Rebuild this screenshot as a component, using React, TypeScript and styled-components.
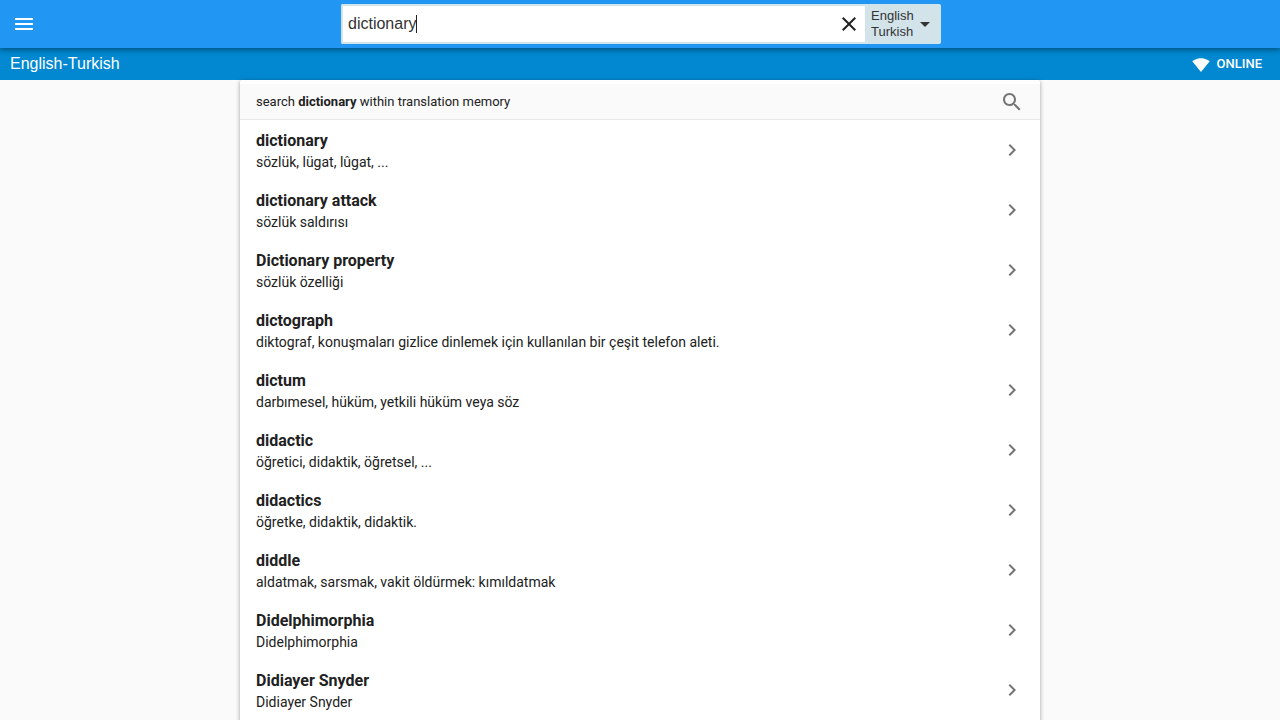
import React, { useLayoutEffect, useRef, useState } from "react";
import styled, { createGlobalStyle } from "styled-components";

const GlobalStyle = createGlobalStyle`
  *, *::before, *::after { box-sizing: border-box; }
  html { scrollbar-width: none; }
  body {
    margin: 0;
    background: #fafafa;
    color: #212121;
    font-family: Roboto, "Noto Sans", sans-serif;
    font-size: 14px;
  }
`;

const TopBar = styled.header`
  position: relative;
  z-index: 2;
  display: grid;
  grid-template-columns: 1fr minmax(0, 600px) 1fr;
  align-items: center;
  height: 48px;
  background: #2196f3;
  box-shadow: 0 2px 5px rgba(0, 0, 0, 0.4);
`;

const IconButton = styled.button`
  display: flex;
  align-items: center;
  justify-content: center;
  width: 24px;
  height: 24px;
  padding: 0;
  border: 0;
  background: none;
  color: inherit;
  cursor: pointer;
`;

const MenuButton = styled(IconButton)`
  margin-left: 12px;
  color: #fff;
`;

const SearchBox = styled.form`
  display: flex;
  height: 40px;
  margin: 0 -1px 0 1px;
  border: 2px solid #d2e4ea;
  border-right-width: 0;
  border-radius: 2px;
  background: #d2e4ea;
`;

const Field = styled.div`
  position: relative;
  display: flex;
  flex: 1;
  align-items: center;
  min-width: 0;
  padding-right: 4px;
  background: #fff;
  color: #212121;
`;

const SearchInput = styled.input`
  flex: 1;
  min-width: 0;
  height: 36px;
  padding: 0 5px;
  border: 0;
  outline: 0;
  background: none;
  color: #333;
  caret-color: transparent;
  font: 16px "Liberation Sans", Arial, sans-serif;
`;

const Caret = styled.span`
  position: absolute;
  top: 9px;
  width: 1px;
  height: 18px;
  background: #212121;
  pointer-events: none;
`;

const LanguageButton = styled.button`
  display: flex;
  align-items: center;
  width: 76px;
  padding: 0 0 0 6px;
  border: 0;
  background: none;
  color: #333;
  font: 13px/16px "Liberation Sans", Arial, sans-serif;
  text-align: left;
  cursor: pointer;
`;

const Languages = styled.span`
  flex: none;
  width: 42px;
`;

const Line = styled.span`
  display: block;
`;

const StatusBar = styled.div`
  display: flex;
  align-items: center;
  justify-content: space-between;
  height: 32px;
  padding: 0 18px 0 10px;
  background: #0288d1;
  color: #fff;
`;

const DictionaryName = styled.h1`
  margin: 0;
  font: 16px/32px "Liberation Sans", Arial, sans-serif;
`;

const Status = styled.div`
  display: flex;
  align-items: flex-end;
  gap: 7px;
  font-size: 13px;
  font-weight: 500;
  line-height: 20px;
`;

const Panel = styled.main`
  max-width: 800px;
  margin: 0 auto;
  padding: 4px 0 16px;
  border-radius: 2px;
  background: #fff;
  box-shadow: 0 1px 4px rgba(0, 0, 0, 0.37);
`;

const MemoryLink = styled.a`
  display: flex;
  align-items: center;
  justify-content: space-between;
  height: 36px;
  padding: 0 16px;
  border-bottom: 1px solid #e8e8e8;
  background: #fafafa;
  color: inherit;
  font-size: 13px;
  text-decoration: none;
`;

const Results = styled.ul`
  margin: 0;
  padding: 0;
  list-style: none;
`;

const ResultLink = styled.a`
  display: flex;
  align-items: center;
  justify-content: space-between;
  height: 60px;
  padding: 0 16px;
  color: inherit;
  text-decoration: none;
`;

const ResultText = styled.span`
  padding-top: 2px;
`;

const Term = styled.strong`
  display: block;
  font-size: 16px;
  font-weight: 700;
  line-height: 22px;
`;

const Meaning = styled.span`
  display: block;
  line-height: 20px;
`;

const Svg = styled.svg<{ $muted?: boolean }>`
  display: block;
  flex: none;
  fill: ${(p) => (p.$muted ? "#757575" : "currentColor")};
`;

const paths = {
  menu: "M3 18h18v-2H3v2zm0-5h18v-2H3v2zm0-7v2h18V6H3z",
  close:
    "M19 6.41L17.59 5 12 10.59 6.41 5 5 6.41 10.59 12 5 17.59 6.41 19 12 13.41 17.59 19 19 17.59 13.41 12z",
  dropDown: "M7 10l5 5 5-5z",
  wifi:
    "M12.01 21.49L23.64 7c-.45-.34-4.93-4-11.64-4C5.28 3 .81 6.66.36 7l11.63 14.49.01.01.01-.01z",
  search:
    "M15.5 14h-.79l-.28-.27C15.41 12.59 16 11.11 16 9.5 16 5.91 13.09 3 9.5 3S3 5.91 3 9.5 5.91 16 9.5 16c1.61 0 3.09-.59 4.23-1.57l.27.28v.79l5 4.99L20.49 19l-4.99-5zm-6 0C7.01 14 5 11.99 5 9.5S7.01 5 9.5 5 14 7.01 14 9.5 11.99 14 9.5 14z",
  chevron: "M10 6L8.59 7.41 13.17 12l-4.58 4.59L10 18l6-6z",
};

function Icon({ name, size = 24, muted }: { name: keyof typeof paths; size?: number; muted?: boolean }) {
  return (
    <Svg viewBox="0 0 24 24" width={size} height={size} $muted={muted} aria-hidden="true">
      <path d={paths[name]} />
    </Svg>
  );
}

const results = [
  ["dictionary", "sözlük, lügat, lûgat, ..."],
  ["dictionary attack", "sözlük saldırısı"],
  ["Dictionary property", "sözlük özelliği"],
  ["dictograph", "diktograf, konuşmaları gizlice dinlemek için kullanılan bir çeşit telefon aleti."],
  ["dictum", "darbımesel, hüküm, yetkili hüküm veya söz"],
  ["didactic", "öğretici, didaktik, öğretsel, ..."],
  ["didactics", "öğretke, didaktik, didaktik."],
  ["diddle", "aldatmak, sarsmak, vakit öldürmek: kımıldatmak"],
  ["Didelphimorphia", "Didelphimorphia"],
  ["Didiayer Snyder", "Didiayer Snyder"],
];

export default function App() {
  const [query, setQuery] = useState("dictionary");
  const [caretLeft, setCaretLeft] = useState(5);
  const input = useRef<HTMLInputElement>(null);

  // The caret follows the end of the typed text.
  useLayoutEffect(() => {
    const context = document.createElement("canvas").getContext("2d");
    if (!context || !input.current) return;
    context.font = getComputedStyle(input.current).font;
    setCaretLeft(5 + Math.round(context.measureText(query).width));
  }, [query]);

  return (
    <>
      <GlobalStyle />
      <TopBar>
        <MenuButton type="button" aria-label="Menu">
          <Icon name="menu" />
        </MenuButton>
        <SearchBox role="search" onSubmit={(e) => e.preventDefault()}>
          <Field>
            <SearchInput
              ref={input}
              type="text"
              aria-label="Search"
              value={query}
              onChange={(e) => setQuery(e.target.value)}
            />
            <Caret style={{ left: caretLeft }} />
            <IconButton type="button" aria-label="Clear" onClick={() => setQuery("")}>
              <Icon name="close" />
            </IconButton>
          </Field>
          <LanguageButton type="button" aria-haspopup="listbox">
            <Languages>
              <Line>English</Line>
              <Line>Turkish</Line>
            </Languages>
            <Icon name="dropDown" />
          </LanguageButton>
        </SearchBox>
      </TopBar>
      <StatusBar>
        <DictionaryName>English-Turkish</DictionaryName>
        <Status>
          <Icon name="wifi" size={18} />
          <span>ONLINE</span>
        </Status>
      </StatusBar>
      <Panel>
        <MemoryLink href="#memory">
          <span>
            search <b>{query}</b> within translation memory
          </span>
          <Icon name="search" muted />
        </MemoryLink>
        <Results>
          {results.map(([term, meaning]) => (
            <li key={term}>
              <ResultLink href={`#${encodeURIComponent(term)}`}>
                <ResultText>
                  <Term>{term}</Term>
                  <Meaning>{meaning}</Meaning>
                </ResultText>
                <Icon name="chevron" muted />
              </ResultLink>
            </li>
          ))}
        </Results>
      </Panel>
    </>
  );
}
